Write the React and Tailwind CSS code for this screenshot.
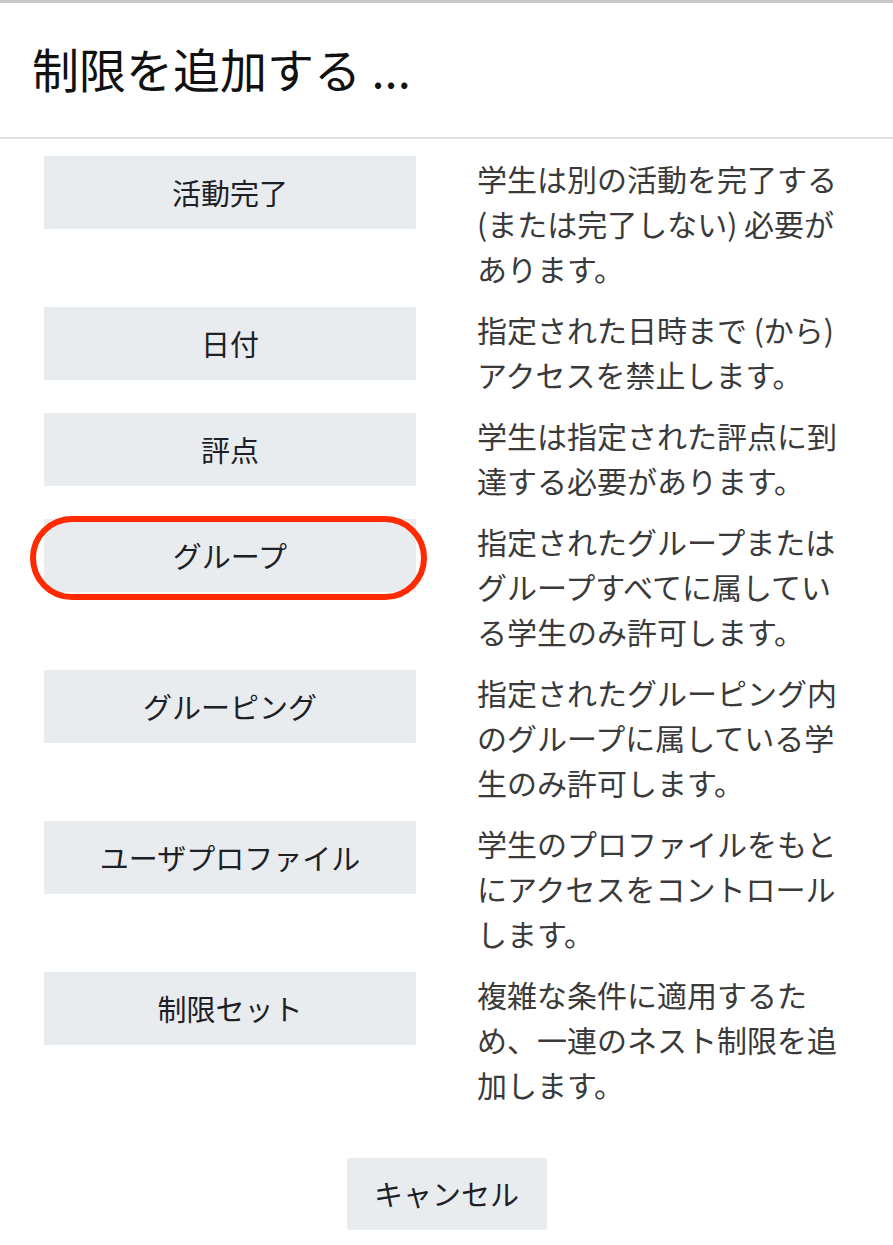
import React from "react";

const options = [
  { label: "活動完了", desc: "学生は別の活動を完了する (または完了しない) 必要があります。" },
  { label: "日付", desc: "指定された日時まで (から) アクセスを禁止します。" },
  { label: "評点", desc: "学生は指定された評点に到達する必要があります。" },
  { label: "グループ", desc: "指定されたグループまたはグループすべてに属している学生のみ許可します。", marked: true },
  { label: "グルーピング", desc: "指定されたグルーピング内のグループに属している学生のみ許可します。" },
  { label: "ユーザプロファイル", desc: "学生のプロファイルをもとにアクセスをコントロールします。" },
  { label: "制限セット", desc: "複雑な条件に適用するため、一連のネスト制限を追加します。" },
];

const App = () => {
  return (
    <div
      className="min-h-[1245px] w-full bg-white text-[#1d2125]"
      style={{ fontFamily: '"Noto Sans CJK JP", "Noto Sans", sans-serif' }}
    >
      <div className="h-[3px] w-full bg-[#c8c8c8]"></div>
      <div className="flex h-[136px] items-center border-b-2 border-[#dee2e6] pb-[6px] pl-[32px]">
        <h1 className="text-[47px] font-normal leading-none text-[#111]">
          制限を追加する ...
        </h1>
      </div>

      <div className="flex flex-col gap-[16px] pl-[44px] pr-[46px] pt-[17px]">
        {options.map((opt) => (
          <div key={opt.label} className="grid grid-cols-[372px_370px] gap-x-[61px]">
            <div className="relative h-[73px]">
              <button className="flex h-[73px] w-full items-center justify-center bg-[#e9ecef] text-[29px] text-[#1d2125]">
                {opt.label}
              </button>
              {opt.marked && (
                <div className="pointer-events-none absolute left-[-14px] right-[-11px] top-[-3px] bottom-[-8px] rounded-full border-[6px] border-[#ff2a00]"></div>
              )}
            </div>
            <p className="text-[30px] leading-[45px] text-[#3a3a3a]">{opt.desc}</p>
          </div>
        ))}
      </div>

      <div className="flex justify-center pt-[51px]">
        <button className="flex h-[72px] w-[200px] items-center justify-center rounded-[3px] bg-[#e9ecef] text-[29px] text-[#1d2125]">
          キャンセル
        </button>
      </div>
    </div>
  );
};

export default App;
